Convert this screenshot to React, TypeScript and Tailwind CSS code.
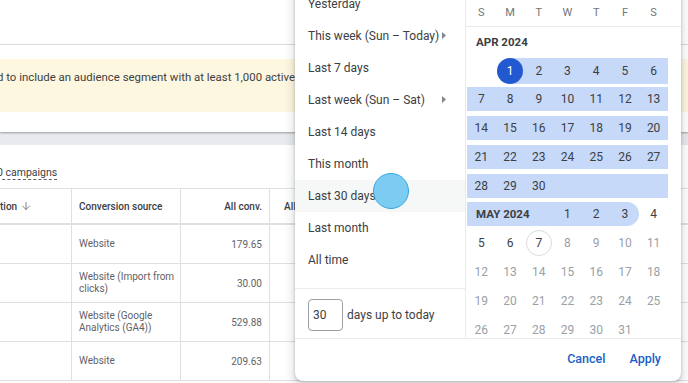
import { ArrowDown } from 'lucide-react'

const presets = [
  { label: 'Yesterday' },
  { label: 'This week (Sun – Today)', sub: true },
  { label: 'Last 7 days' },
  { label: 'Last week (Sun – Sat)', sub: true },
  { label: 'Last 14 days' },
  { label: 'This month' },
  { label: 'Last 30 days', hover: true },
  { label: 'Last month' },
  { label: 'All time' },
]

const rows = [
  { source: 'Website', conv: '179.65' },
  { source: 'Website (Import from clicks)', conv: '30.00' },
  { source: 'Website (Google Analytics (GA4))', conv: '529.88' },
  { source: 'Website', conv: '209.63' },
]

const aprWeeks = [
  [null, 1, 2, 3, 4, 5, 6],
  [7, 8, 9, 10, 11, 12, 13],
  [14, 15, 16, 17, 18, 19, 20],
  [21, 22, 23, 24, 25, 26, 27],
  [28, 29, 30, null, null, null, null],
]

const mayWeeks = [
  [5, 6, 7, 8, 9, 10, 11],
  [12, 13, 14, 15, 16, 17, 18],
  [19, 20, 21, 22, 23, 24, 25],
  [26, 27, 28, 29, 30, 31, null],
]

const Background = () => (
  <div className="absolute inset-0 bg-[#e8eaed]">
    <div className="bg-white h-[132px] shadow-[0_1px_2px_rgba(60,64,67,0.45)]">
      <div className="h-[45px] border-b border-[#dadce0]" />
      <div className="mt-[14px] h-[53px] bg-[#fef7e0] pt-[10px]">
        <p className="text-[11.4px] text-[#3c4043] whitespace-nowrap ml-[-3px]">
          d to include an audience segment with at least 1,000 active users
        </p>
      </div>
    </div>
    <div className="mt-[13px] bg-white h-[300px]">
      <div className="h-[43px] pt-[14px]">
        <span className="text-[10.5px] text-[#3c4043] ml-[-3px] border-b border-dashed border-[#5f6368] leading-[13px] inline-block">
          0 campaigns
        </span>
      </div>
      <div className="border-t border-[#e0e0e0] text-[10px]">
        <div className="flex h-[36px] border-b-2 border-[#e0e0e0] font-medium text-[#3c4043]">
          <div className="w-[72px] border-r border-[#e0e0e0] flex items-center gap-[3px]">
            tion <ArrowDown size={12} strokeWidth={1.6} className="text-[#5f6368]" />
          </div>
          <div className="w-[109px] border-r border-[#e0e0e0] flex items-center pl-[7px]">Conversion source</div>
          <div className="w-[89px] border-r border-[#e0e0e0] flex items-center justify-end pr-[7px]">All conv.</div>
          <div className="flex-1 flex items-center pl-[14px]">All conv. value</div>
        </div>
        {rows.map((r, i) => (
          <div key={i} className="flex h-[39px] border-b border-[#e0e0e0] text-[#5f6368]">
            <div className="w-[72px] border-r border-[#e0e0e0]" />
            <div className="w-[109px] border-r border-[#e0e0e0] flex items-center pl-[7px] pr-[4px] leading-[12px]">{r.source}</div>
            <div className="w-[89px] border-r border-[#e0e0e0] flex items-center justify-end pr-[7px]">{r.conv}</div>
            <div className="flex-1" />
          </div>
        ))}
      </div>
    </div>
  </div>
)

const Triangle = () => (
  <svg width="4" height="7" viewBox="0 0 4 7" className="absolute left-[147px] top-[12px]">
    <path d="M0 0 L4 3.5 L0 7 Z" fill="#80868b" />
  </svg>
)

const DayCell = ({ d, dark }: { d: number | null; dark?: boolean }) => (
  <div className={`h-[24px] flex items-center justify-center ${dark ? 'text-[#3c4043]' : 'text-[#9aa0a6]'}`}>
    {d === 7 ? (
      <span className="w-[26px] h-[26px] rounded-full border border-[#dadce0] flex items-center justify-center text-[#3c4043]">7</span>
    ) : (
      d
    )}
  </div>
)

const Calendar = () => (
  <div className="flex-1 flex flex-col">
    <div className="shrink-0 h-[39px] border-b border-[#e8eaed] flex items-end pb-[5px]">
      <div className="grid grid-cols-7 w-[201px] ml-[1px] text-[11px] text-[#70757a] text-center leading-[16px]">
        {['S', 'M', 'T', 'W', 'T', 'F', 'S'].map((d, i) => (
          <div key={i}>{d}</div>
        ))}
      </div>
    </div>
    <div className="shrink-0 pl-[10px] pt-[7px] h-[23px] text-[11.5px] font-bold text-[#3c4043] leading-[16px]">APR 2024</div>
    <div className="shrink-0 flex flex-col gap-[4.9px] mt-[8px] w-[201px] ml-[1px] text-[12px] text-[#3c4043]">
      {aprWeeks.map((w, i) => (
        <div key={i} className="shrink-0 grid grid-cols-7 h-[24px]">
          {w.map((d, j) => {
            if (i === 0 && j === 0) return <div key={j} />
            if (d === 1)
              return (
                <div key={j} className="flex items-center justify-center bg-[linear-gradient(to_right,transparent_50%,#c6d9f9_50%)]">
                  <span className="w-[26px] h-[26px] rounded-full bg-[#2259d1] text-white flex items-center justify-center">1</span>
                </div>
              )
            return (
              <div key={j} className="bg-[#c6d9f9] flex items-center justify-center">
                {d}
              </div>
            )
          })}
        </div>
      ))}
      <div className="shrink-0 grid grid-cols-7 h-[24px]">
        <div className="col-span-3 bg-[#c6d9f9] flex items-center pl-[9px] text-[11.5px] font-bold">MAY 2024</div>
        <div className="bg-[#c6d9f9] flex items-center justify-center">1</div>
        <div className="bg-[#c6d9f9] flex items-center justify-center">2</div>
        <div className="bg-[#c6d9f9] rounded-r-full flex items-center justify-center">3</div>
        <div className="flex items-center justify-center">4</div>
      </div>
      {mayWeeks.map((w, i) => (
        <div key={i} className="shrink-0 grid grid-cols-7">
          {w.map((d, j) => (
            <DayCell key={j} d={d} dark={i === 0 && j < 3} />
          ))}
        </div>
      ))}
    </div>
  </div>
)

export default function App() {
  return (
    <div className="relative w-[688px] h-[383px] overflow-hidden font-['Roboto',sans-serif]">
      <Background />
      <div className="absolute left-[295px] top-[-12px] w-[386px] h-[393px] bg-white rounded-lg shadow-[0_1px_3px_rgba(60,64,67,0.3),0_4px_8px_3px_rgba(60,64,67,0.15)] flex flex-col">
        <div className="shrink-0 h-[350px] flex overflow-hidden">
          <div className="w-[171px] border-r border-[#e8eaed] flex flex-col">
            <div className="shrink-0 pb-[12px] border-b border-[#e8eaed]">
              {presets.map(p => (
                <div
                  key={p.label}
                  className={`relative h-[32px] flex items-center pl-[13px] text-[12px] text-[#3c4043] ${p.hover ? 'bg-[#f6f7f7]' : ''}`}
                >
                  {p.label}
                  {p.sub && <Triangle />}
                </div>
              ))}
            </div>
            <div className="shrink-0 pl-[13px] pt-[10px] flex flex-col gap-[7px]">
              <div className="flex items-center gap-[4px]">
                <div className="w-[35px] h-[32px] border border-[#9aa0a6] rounded-[4px] flex items-center pl-[4px] text-[12px] text-[#3c4043]">30</div>
                <span className="text-[12px] text-[#3c4043]">days up to today</span>
              </div>
              <div className="w-[35px] h-[32px] border border-[#9aa0a6] rounded-[4px]" />
            </div>
          </div>
          <Calendar />
        </div>
        <div className="flex-1 border-t border-[#e8eaed] flex items-center justify-end gap-[24px] pr-[20px] pb-[2px] text-[12.5px] font-medium text-[#1a5fc8]">
          <span>Cancel</span>
          <span>Apply</span>
        </div>
      </div>
      <div className="absolute left-[373px] top-[173px] w-[36px] h-[36px] rounded-full bg-[#7ccbf1] border border-[#35a6e6]" />
    </div>
  )
}
